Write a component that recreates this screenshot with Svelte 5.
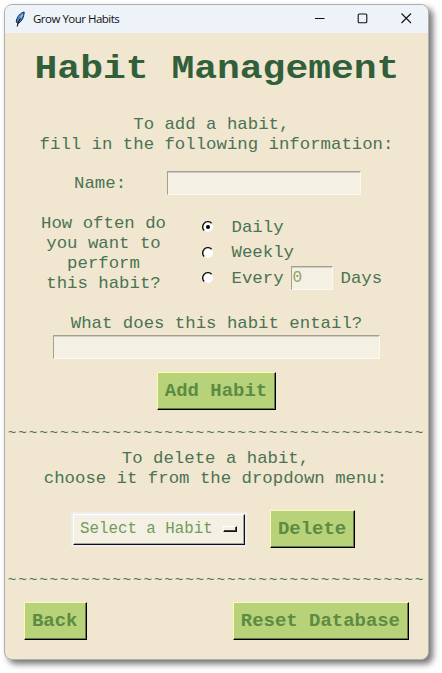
<script>
  let frequency = $state('daily');
  const divider = '~'.repeat(40);
</script>

{#snippet radio(value)}
  <button class="radio" aria-label={value} onclick={() => (frequency = value)}>
    <svg width="12" height="12" viewBox="0 0 12 12">
      <circle cx="6" cy="6" r="5" fill="#fff" />
      <path d="M2.2 9.6A5 5 0 0 1 9.6 2.2" fill="none" stroke="#111" stroke-width="1.4" />
      {#if frequency === value}<circle cx="6" cy="6" r="2" fill="#000" />{/if}
    </svg>
  </button>
{/snippet}

<div class="window">
  <header>
    <svg class="feather" width="12" height="17" viewBox="0 0 12 17">
      <path d="M10.2 1C6.5 1.8 2.8 5.5 2.2 11L4.2 12.4C8 10.5 10 6 10.2 1Z" fill="#4c91de" stroke="#17253a" stroke-width="1" />
      <path d="M8.6 3.5 5.4 8.5" stroke="#9dcaf2" stroke-width="1.1" />
      <path d="M6.5 7Q4 10.5 3.2 15.5" fill="none" stroke="#111" stroke-width="1.1" />
    </svg>
    <span class="caption">Grow Your Habits</span>
    <svg class="controls" width="100" height="12" viewBox="0 0 100 12" fill="none" stroke="#111" stroke-width="1.1">
      <path d="M0 5.5H9.5" />
      <rect x="43.2" y="1" width="8.6" height="8.8" rx="1" />
      <path d="M86.5 .5 96 10M96 .5 86.5 10" />
    </svg>
  </header>
  <main>
    <h1>Habit Management</h1>
    <p class="intro">{'To add a habit, \nfill in the following information:'}</p>
    <div class="name"><span>Name:</span><div class="field"></div></div>
    <div class="often">
      <p>{'How often do\nyou want to\nperform\nthis habit?'}</p>
      <div class="choices">
        <div class="choice">{@render radio('daily')}<span>Daily</span></div>
        <div class="choice">{@render radio('weekly')}<span>Weekly</span></div>
        <div class="choice">{@render radio('every')}<span>Every</span><div class="field days">0</div><span>Days</span></div>
      </div>
    </div>
    <p class="entail">What does this habit entail?</p>
    <div class="field wide"></div>
    <button class="action add">Add Habit</button>
    <div class="divider first">{divider}</div>
    <p class="remove">{'To delete a habit,\nchoose it from the dropdown menu:'}</p>
    <div class="pick">
      <button class="menu">
        <span>Select a Habit</span>
        <i></i>
      </button>
      <button class="action">Delete</button>
    </div>
    <div class="divider second">{divider}</div>
    <footer>
      <button class="action">Back</button>
      <button class="action">Reset Database</button>
    </footer>
  </main>
</div>

<style>
  :global(body) { background: #fff; }
  :global(#app) { display: flow-root; height: 673px; }
  .window {
    box-sizing: border-box;
    width: 425px;
    height: 656px;
    margin: 4px 0 0 4px;
    border: 1px solid #adb0b0;
    border-radius: 8px;
    overflow: hidden;
    background: #f1e7d0;
    box-shadow: 4px 4px 6px rgba(0, 0, 0, 0.55);
  }
  header {
    display: flex;
    align-items: center;
    height: 28px;
    padding-left: 9px;
    background: #eef3fa;
  }
  .caption {
    margin-left: 7px;
    font: 11.5px/16px "Open Sans", sans-serif;
    letter-spacing: -0.5px;
    color: #111;
    width: 90px;
    white-space: nowrap;
  }
  .controls { margin-left: 192px; }
  main {
    display: flex;
    flex-direction: column;
    align-items: center;
    width: 423px;
    font: 17.35px/20px "Liberation Mono", "Courier New", monospace;
    color: #4a7355;
  }
  p, h1 { margin: 0; text-align: center; font-weight: inherit; white-space: pre; }
  h1 {
    margin: 13px 0 0 1px;
    font: bold 38px/44px "Liberation Mono", monospace;
    color: #315f3c;
    transform: scaleY(0.87);
    transform-origin: 50% 32px;
  }
  .intro { margin-top: 25px; }
  .name {
    display: flex;
    align-items: center;
    align-self: flex-start;
    margin: 16px 0 0 69px;
  }
  .name span { padding-top: 2px; }
  .name .field { width: 194px; margin-left: 41px; }
  .field {
    box-sizing: border-box;
    height: 24px;
    background: #f4f0e4;
    border: 1px solid #a29f96;
    border-right-color: #fbf8ed;
    border-bottom-color: #fbf8ed;
    box-shadow: inset 0 1px #cfcbbf;
  }
  .often {
    display: flex;
    align-self: flex-start;
    margin: 19px 0 0 36px;
  }
  .often p { width: 125px; }
  .choices { margin: 1px 0 -1px 36px; }
  .choice { display: flex; align-items: center; height: 25.5px; }
  .radio { width: 12px; height: 12px; border: 0; padding: 0; margin: -1px 17.5px 0 0; background: none; }
  .radio svg { display: block; }
  .days {
    width: 42px;
    margin: -2px 8px 0 7px;
    padding-left: 1px;
    font-size: 16px;
    line-height: 23px;
    color: #91a266;
  }
  .entail { margin-top: 20px; }
  .wide { width: 327px; margin-top: 1px; }
  .action {
    box-sizing: border-box;
    height: 38px;
    padding: 0 8px 0 7px;
    border: 1px solid #000;
    border-top-color: #fcfcaf;
    border-left-color: #fcfcaf;
    box-shadow: inset -1px -1px #68794a;
    background: #b7d278;
    font: bold 18.97px/36px "Liberation Mono", monospace;
    color: #5c8b43;
  }
  .add { margin-top: 13px; }
  .divider { font-size: 14.5px; letter-spacing: 1.73px; }
  .first { margin-top: 13px; }
  .remove { margin-top: 6px; transform: translateX(-1px); }
  .pick {
    display: flex;
    align-items: center;
    align-self: flex-start;
    margin: 21px 0 0 66px;
  }
  .pick .action { margin-left: 23px; }
  .menu {
    display: flex;
    align-items: center;
    box-sizing: border-box;
    width: 172px;
    height: 31px;
    margin: 0 2px;
    padding: 0 7px 0 6px;
    border: 1px solid #111;
    border-top-color: #fff;
    border-left-color: #fff;
    box-shadow: inset -1px -1px #a8a59b, 0 0 0 2px #ededf0;
    background: #f4f0e4;
    font: 15.8px/29px "Liberation Mono", monospace;
    color: #729b59;
  }
  .menu i {
    width: 14px;
    height: 6px;
    margin-left: auto;
    box-sizing: border-box;
    border-top: 1px solid #fff;
    border-left: 1px solid #fff;
    border-right: 1px solid #111;
    border-bottom: 1px solid #111;
    box-shadow: inset -1px -1px #444;
  }
  .second { margin-top: 22px; }
  footer {
    display: flex;
    justify-content: space-between;
    align-self: stretch;
    padding: 12px 19px 0 19px;
  }
</style>
